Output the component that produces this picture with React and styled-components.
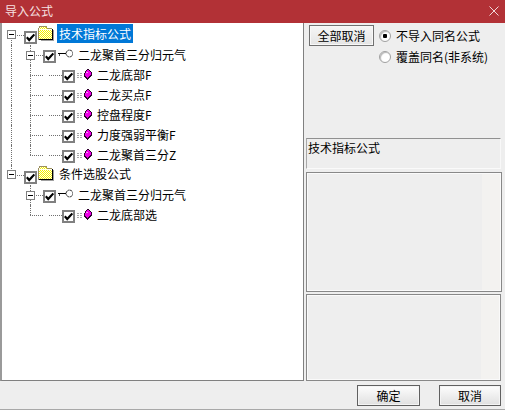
import styled, { createGlobalStyle } from "styled-components";

const GlobalStyle = createGlobalStyle`
  html, body {
    margin: 0;
    padding: 0;
    background: #eeeeee;
  }
  body {
    font-family: "Noto Sans CJK SC", "Liberation Sans", sans-serif;
    font-size: 12px;
    color: #000;
  }
`;

const treeRows = [
  { level: "root", label: "技术指标公式", guides: [{ box: true, down: true }], selected: true },
  { level: "group", label: "二龙聚首三分归元气", guides: [{ up: true, down: true }, { box: true, up: true, down: true }] },
  { level: "leaf", label: "二龙底部F", guides: [{ up: true, down: true }, { up: true, down: true, right: true }, { right: true }] },
  { level: "leaf", label: "二龙买点F", guides: [{ up: true, down: true }, { up: true, down: true, right: true }, { right: true }] },
  { level: "leaf", label: "控盘程度F", guides: [{ up: true, down: true }, { up: true, down: true, right: true }, { right: true }] },
  { level: "leaf", label: "力度强弱平衡F", guides: [{ up: true, down: true }, { up: true, down: true, right: true }, { right: true }] },
  { level: "leaf", label: "二龙聚首三分Z", guides: [{ up: true, down: true }, { up: true, right: true }, { right: true }] },
  { level: "root", label: "条件选股公式", guides: [{ box: true, up: true }] },
  { level: "group", label: "二龙聚首三分归元气", guides: [{}, { box: true, up: true, down: true }] },
  { level: "leaf", label: "二龙底部选", guides: [{}, { up: true, right: true }, { right: true }] },
];

function FolderIcon() {
  return (
    <svg width="16" height="20" viewBox="0 0 16 20" shapeRendering="crispEdges">
      <defs>
        <pattern id="dither" width="2" height="2" patternUnits="userSpaceOnUse">
          <rect width="2" height="2" fill="#f4f000" />
          <rect width="1" height="1" fill="#fffff0" />
          <rect x="1" y="1" width="1" height="1" fill="#fffff0" />
        </pattern>
      </defs>
      <path d="M1 14V3H2V2H8V3H9V4H14V14Z" fill="url(#dither)" />
      <path d="M0.5 14.5V3.5L2 1.5H8L9.5 3.5H14" fill="none" stroke="#9c9060" />
      <path d="M1 4.5H14" stroke="#fffff0" />
      <path d="M14.5 4V14.5H1" fill="none" stroke="#000" />
      <path d="M15.5 5V15.5H3" fill="none" stroke="#a0a0a0" />
    </svg>
  );
}

function KeyIcon() {
  return (
    <svg width="16" height="20" viewBox="0 0 16 20">
      <path d="M1 8.5H9" fill="none" stroke="#000" shapeRendering="crispEdges" />
      <path d="M2.5 8.5V10.5" fill="none" stroke="#505050" shapeRendering="crispEdges" />
      <circle cx="12.5" cy="8.5" r="3.4" fill="#fff" stroke="#303030" strokeDasharray="2.2 0.5" />
    </svg>
  );
}

function FormulaIcon() {
  return (
    <svg width="16" height="20" viewBox="0 0 16 20" shapeRendering="crispEdges">
      <path d="M1 8.5H7M1 10.5H7M1 12.5H7" fill="none" stroke="#a8a8a8" strokeDasharray="2 1" />
      <path d="M11 4H13V5H14V6H15V7H16V11H15V12H14V13H13V14H12V15H11V14H10V13H9V12H8V8H9V6H10V5H11Z" fill="#300030" />
      <path d="M11 5H13V6H14V7H15V10H14V11H13V12H12V13H11V12H10V11H9V8H10V6H11Z" fill="#ee00e6" />
      <path d="M10 7H12V8H10Z" fill="#ff90f8" />
    </svg>
  );
}

const rowIcons = { root: FolderIcon, group: KeyIcon, leaf: FormulaIcon };

export default function App() {
  return (
    <>
      <GlobalStyle />
      <Dialog>
        <TitleBar>
          <TitleText>导入公式</TitleText>
          <CloseIcon viewBox="0 0 10 10">
            <path d="M0.5 0.5L9.5 9.5M9.5 0.5L0.5 9.5" stroke="#f0d8d8" fill="none" />
          </CloseIcon>
        </TitleBar>
        <Main>
          <Tree>
            {treeRows.map((row, i) => {
              const Icon = rowIcons[row.level];
              return (
                <Row key={i}>
                  {row.guides.map((g, j) => (
                    <Guide key={j} $up={g.up} $down={g.down} $right={g.right || g.box}>
                      {g.box && <Expander $root={row.level === "root"} />}
                    </Guide>
                  ))}
                  <Check $root={row.level === "root"}>
                    <svg width="9" height="9" viewBox="0 0 9 9">
                      <path d="M0.8 4.3L3.2 7L8.4 1.4" fill="none" stroke="#000" strokeWidth="2.2" />
                    </svg>
                  </Check>
                  <IconSlot>
                    <Icon />
                  </IconSlot>
                  <Label $root={row.level === "root"} $selected={row.selected}>
                    {row.label}
                  </Label>
                </Row>
              );
            })}
          </Tree>
          <Side>
            <Options>
              <Button>全部取消</Button>
              <RadioGroup>
                <RadioRow>
                  <Radio $checked />
                  不导入同名公式
                </RadioRow>
                <RadioRow>
                  <Radio />
                  覆盖同名(非系统)
                </RadioRow>
              </RadioGroup>
            </Options>
            <InfoPanel>技术指标公式</InfoPanel>
            <Panel $width={196} $height={120} />
            <Panel $width={195} $height={87} />
          </Side>
        </Main>
        <Footer>
          <FooterButton $width={63}>确定</FooterButton>
          <FooterButton $width={62}>取消</FooterButton>
        </Footer>
      </Dialog>
    </>
  );
}

const Dialog = styled.div`
  display: flex;
  flex-direction: column;
  box-sizing: border-box;
  width: 505px;
  height: 410px;
  overflow: hidden;
  background: #eeeeee;
  border-bottom: 1px solid #a8a8a8;
`;

const TitleBar = styled.header`
  display: flex;
  align-items: center;
  justify-content: space-between;
  flex: none;
  height: 23px;
  padding: 0 6px 1px 5px;
  box-sizing: border-box;
  background: #b23136;
`;

const TitleText = styled.span`
  color: #f6e2e2;
  font-size: 12px;
  line-height: 16px;
`;

const CloseIcon = styled.svg`
  width: 10px;
  height: 10px;
`;

const Main = styled.main`
  display: flex;
  flex: none;
  height: 358px;
`;

const Tree = styled.section`
  flex: none;
  box-sizing: border-box;
  width: 304px;
  height: 358px;
  padding: 2px 0 0 3px;
  background: #fff;
  border-left: 2px solid #9a9a9a;
  border-right: 1px solid #808080;
  border-bottom: 1px solid #808080;
`;

const Row = styled.div`
  display: flex;
  align-items: flex-start;
  height: 20px;
`;

const Guide = styled.div`
  position: relative;
  flex: none;
  width: 19px;
  height: 20px;

  &::before {
    content: "";
    position: absolute;
    left: 6px;
    top: ${({ $up }) => ($up ? "0" : "10px")};
    bottom: ${({ $down }) => ($down ? "0" : "10px")};
    border-left: 1px dotted #707070;
  }

  &::after {
    content: "";
    position: absolute;
    top: 10px;
    left: 6px;
    right: 0;
    border-top: ${({ $right }) => ($right ? "1px dotted #707070" : "0")};
  }
`;

const Expander = styled.span`
  position: absolute;
  z-index: 1;
  left: 2px;
  top: ${({ $root }) => ($root ? "5px" : "6px")};
  box-sizing: border-box;
  width: 9px;
  height: 9px;
  background: linear-gradient(#000, #000) center / 5px 1px no-repeat, #fff;
  border: 1px solid #808080;
`;

const Check = styled.span`
  display: flex;
  align-items: center;
  justify-content: center;
  flex: none;
  box-sizing: border-box;
  width: 13px;
  height: 13px;
  margin-top: ${({ $root }) => ($root ? "6px" : "5px")};
  background: #fff;
  border: 2px solid #808080;
`;

const IconSlot = styled.span`
  display: block;
  flex: none;
  width: 16px;
  height: 20px;
  margin-left: 1px;

  svg {
    display: block;
  }
`;

const Label = styled.span`
  flex: none;
  margin: ${({ $root }) => ($root ? "-1px 0 0 3px" : "0 0 0 3px")};
  padding: 0 2px;
  height: ${({ $root }) => ($root ? "19px" : "20px")};
  line-height: ${({ $root }) => ($root ? "19px" : "20px")};
  white-space: nowrap;
  color: ${({ $selected }) => ($selected ? "#fff" : "#000")};
  background: ${({ $selected }) => ($selected ? "#0078d7" : "transparent")};
`;

const Side = styled.aside`
  display: flex;
  flex-direction: column;
  flex: 1;
  padding: 0 3px 0 2px;
`;

const Options = styled.div`
  display: flex;
  flex: none;
  align-items: flex-start;
  height: 115px;
  padding: 2px 0 0 3px;
  box-sizing: border-box;
`;

const Button = styled.button`
  flex: none;
  box-sizing: border-box;
  width: 65px;
  height: 21px;
  padding: 0;
  font: inherit;
  color: #000;
  background: linear-gradient(#f6f6f6, #e4e4e4);
  border: 1px solid #707070;
  box-shadow: inset 0 0 0 1px #f8f8f8;
`;

const RadioGroup = styled.div`
  display: flex;
  flex-direction: column;
  margin-left: 5px;
`;

const RadioRow = styled.label`
  display: flex;
  align-items: center;
  height: 21px;
  gap: 5px;
  white-space: nowrap;
`;

const Radio = styled.span`
  flex: none;
  box-sizing: border-box;
  width: 12px;
  height: 12px;
  border-radius: 50%;
  border: 1px solid #a0a0a0;
  background: ${({ $checked }) =>
    $checked ? "radial-gradient(circle, #000 0 2px, #fff 2.5px)" : "#fff"};
  box-shadow: inset 1px 1px 1px #b8b8b8;
`;

const InfoPanel = styled.div`
  flex: none;
  box-sizing: border-box;
  width: 195px;
  height: 31px;
  margin-bottom: 1px;
  padding-left: 1px;
  line-height: 18px;
  background: #eeeeee;
  border-top: 1px solid #909090;
  border-left: 1px solid #a8a8a8;
  border-right: 1px solid #f8f8f8;
  border-bottom: 1px solid #fafafa;
`;

const Panel = styled.div`
  flex: none;
  box-sizing: border-box;
  width: ${({ $width }) => $width}px;
  height: ${({ $height }) => $height}px;
  margin-top: 2px;
  background: linear-gradient(to right, #eeeeee 90%, #f3f2f0 90%);
  border: 1px solid #888888;
  box-shadow: inset 0 0 0 1px #fafafa;
`;

const Footer = styled.footer`
  display: flex;
  flex: 1;
  justify-content: flex-end;
  gap: 19px;
  padding: 4px 4px 0 0;
`;

const FooterButton = styled.button`
  box-sizing: border-box;
  width: ${({ $width }) => $width}px;
  height: 21px;
  padding: 0;
  font: inherit;
  color: #000;
  background: linear-gradient(#fdfdfd, #e0e0e0);
  border: 1px solid #606060;
  box-shadow: inset 0 0 0 1px #f4f4f4;
`;
